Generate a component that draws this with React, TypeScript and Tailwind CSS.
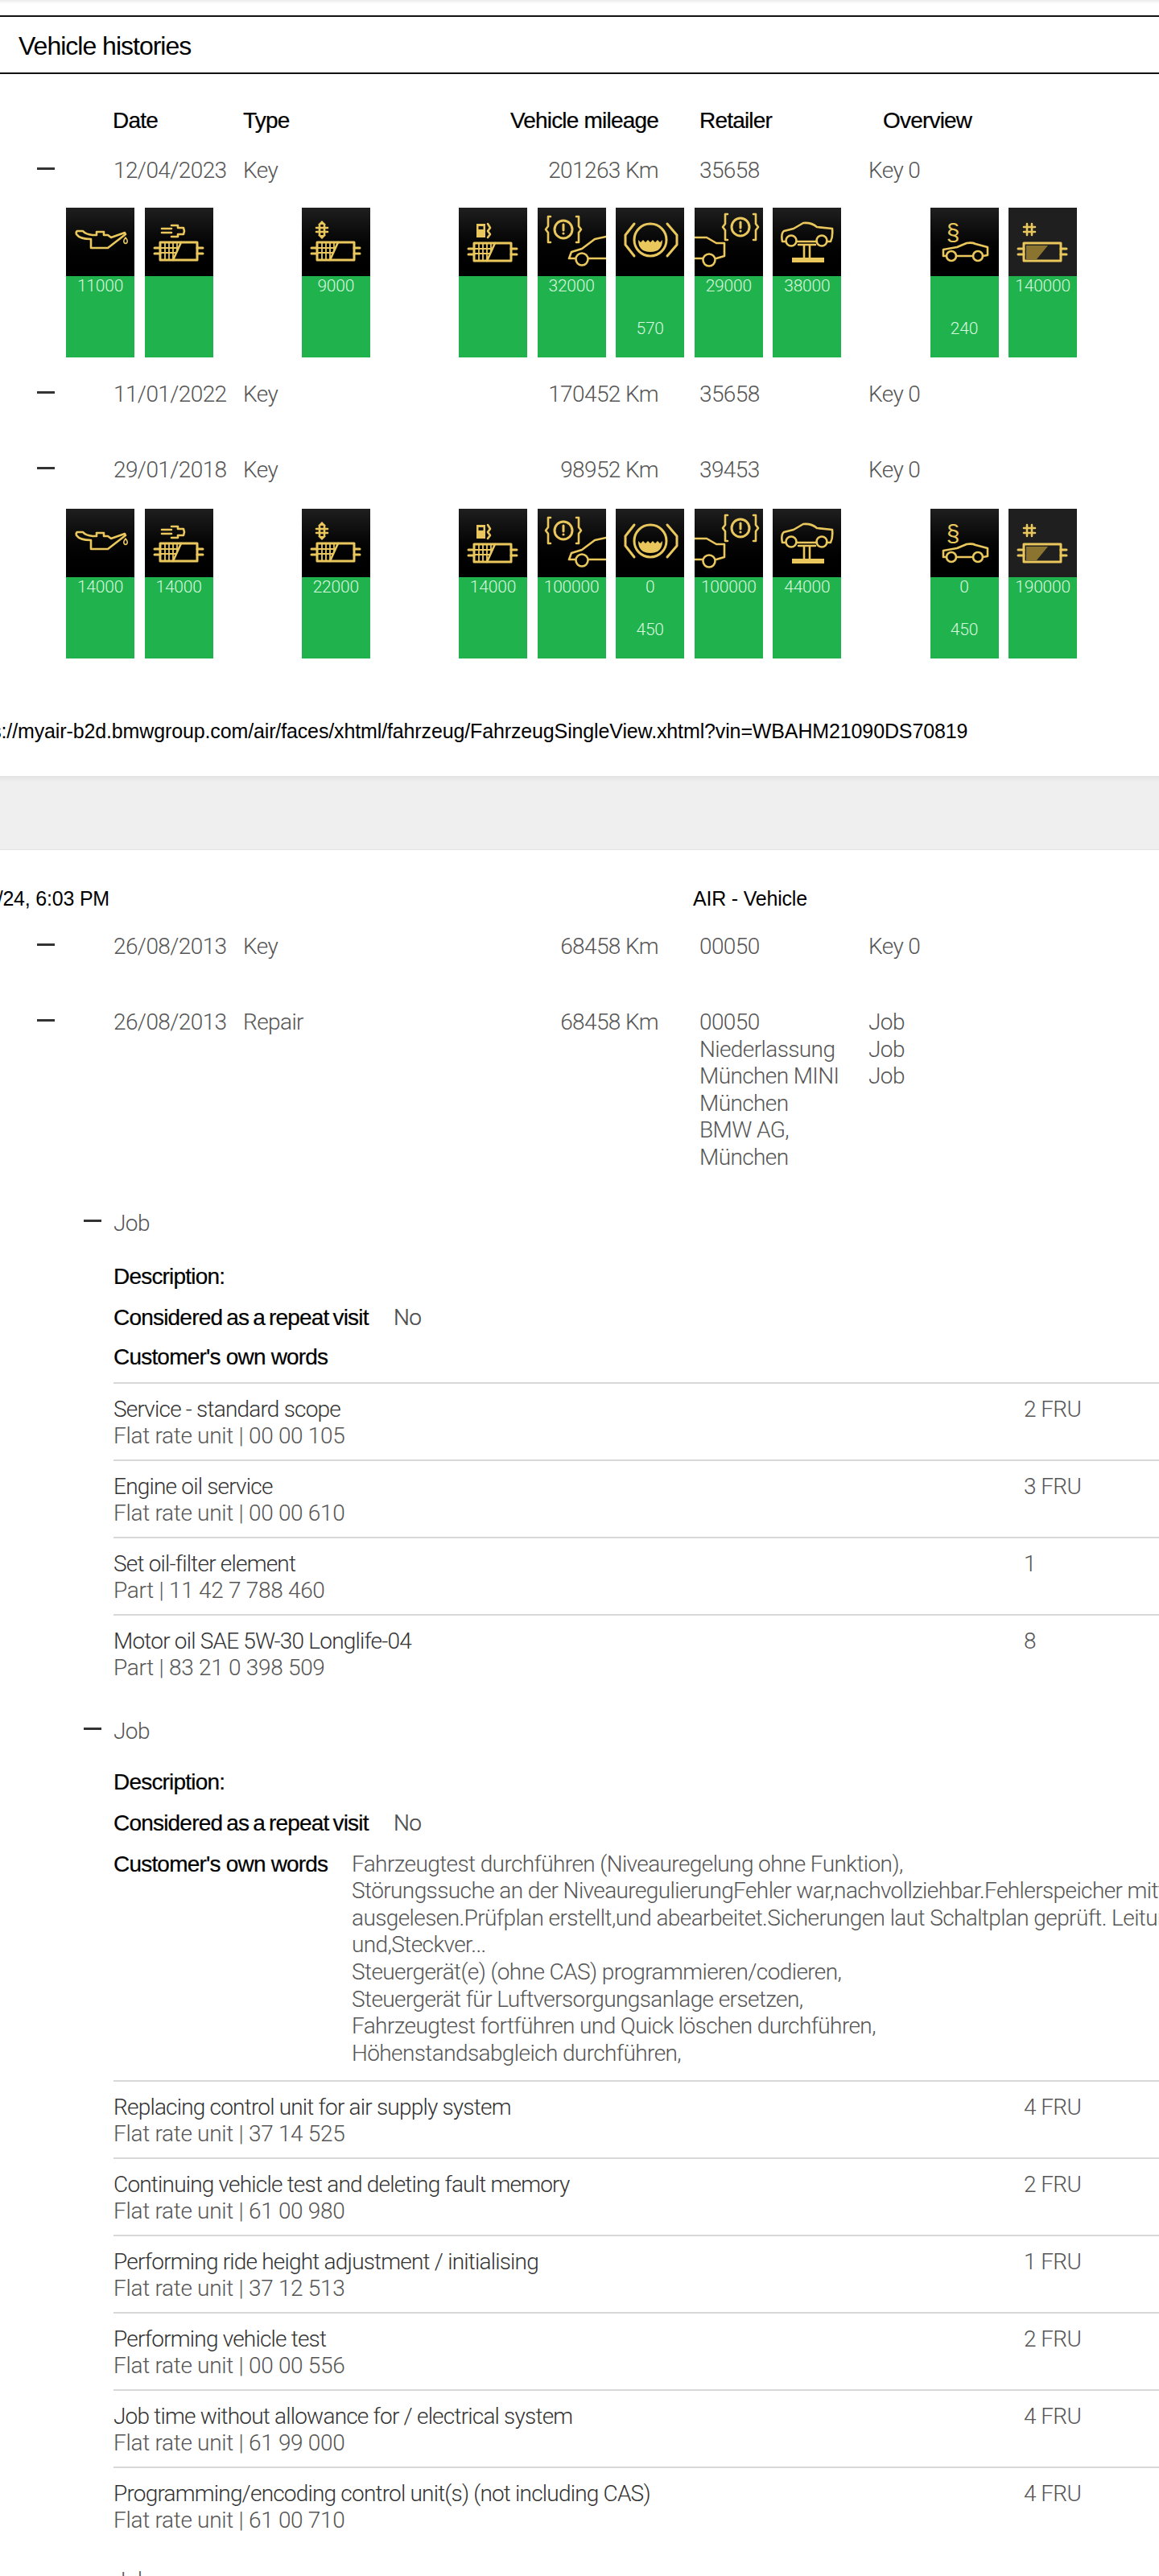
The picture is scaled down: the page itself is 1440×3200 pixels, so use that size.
import React from "react";

const Y = "#e9c75c";
const S = { fill: "none", stroke: Y, strokeWidth: 2.6, strokeLinejoin: "round" as const, strokeLinecap: "round" as const };

function Filter({ y = 0, grid = true, half = false }: { y?: number; grid?: boolean; half?: boolean }) {
  const t = 43 + y;
  return (
    <g>
      {half ? <path d={`M22 ${t + 3}H49L35 ${t + 20}H22Z`} fill="#8a7430" /> : null}
      <path d={`M19 ${t}H65V${t + 22}H19Z`} {...S} strokeWidth={3} />
      <path d={`M12 ${t + 7}H19M12 ${t + 14}H19M65 ${t + 7}H72M65 ${t + 14}H72`} {...S} strokeWidth={3} />
      {grid ? (
        <g>
          <path d={`M45 ${t}L35 ${t + 22}`} {...S} />
          <path d={`M25 ${t + 1}V${t + 21}M30 ${t + 1}V${t + 21}M35 ${t + 1}V${t + 20}M40 ${t + 1}V${t + 10}M20 ${t + 7}H42M20 ${t + 13}H38`} {...S} strokeWidth={1.8} />
        </g>
      ) : null}
    </g>
  );
}

function Brake({ cx, cy, r = 11, bx = 20 }: { cx: number; cy: number; r?: number; bx?: number }) {
  return (
    <g>
      <circle cx={cx} cy={cy} r={r} {...S} strokeWidth={3} />
      <path d={`M${cx} ${cy - 6}V${cy + 1}`} stroke={Y} strokeWidth={3} strokeLinecap="round" />
      <circle cx={cx} cy={cy + 5} r={1.6} fill={Y} />
      <path d={`M${cx - bx + 4} ${cy - 16}H${cx - bx + 1}V${cy - 4}L${cx - bx - 2} ${cy}L${cx - bx + 1} ${cy + 4}V${cy + 16}H${cx - bx + 4}`} {...S} />
      <path d={`M${cx + bx - 4} ${cy - 16}H${cx + bx - 1}V${cy - 4}L${cx + bx + 2} ${cy}L${cx + bx - 1} ${cy + 4}V${cy + 16}H${cx + bx - 4}`} {...S} />
    </g>
  );
}

const icons: Record<string, React.ReactNode> = {
  oil: (
    <g>
      <path d="M14 29H21Q24 33 33 34H38V30H47V34H52L56 37L73 31L74 33L52 50H31V39Q17 39 13 33Q12 30 14 29Z" {...S} />
      <path d="M74 37Q71 41 72 43Q74 46 76 43Q77 41 74 37Z" {...S} strokeWidth={1.6} />
    </g>
  ),
  injector: (
    <g>
      <path d="M21 26H33M21 31H33M33 22H41V25H48L49 29L48 33H41V36H33" {...S} />
      <Filter />
    </g>
  ),
  hash: (
    <g>
      <path d="M22 21V34M28 21V34M18 25H32M18 30H32" {...S} />
      <path d="M25 16L20 21H30ZM25 39L20 34H30Z" fill={Y} />
      <Filter />
    </g>
  ),
  fuel: (
    <g>
      <path d="M22 20H33V37H22Z" fill={Y} />
      <path d="M24.5 23H30.5V27H24.5Z" fill="#141414" />
      <path d="M36 20L39 25L36 29L39 33L36 37" {...S} />
      <Filter y={1} />
    </g>
  ),
  brakeFront: (
    <g>
      <Brake cx={32} cy={27} />
      <path d="M85 36L71 39L55 51L42 55L39 63H47M63 63H85" {...S} />
      <circle cx={55} cy={64} r={7.5} {...S} />
    </g>
  ),
  pad: (
    <g>
      <circle cx={43} cy={40} r={20} {...S} strokeWidth={3} />
      <path d="M28 40L31 43L34 40L37 43L40 40L43 43L46 40L49 43L52 40L55 43L58 40Q58 55 43 55Q28 55 28 40Z" fill={Y} />
      <path d="M23 20L12 34V46L23 60M64 20L76 34V46L64 60" {...S} strokeWidth={3} />
    </g>
  ),
  brakeRear: (
    <g>
      <Brake cx={57} cy={24} />
      <path d="M0 37H15L27 44H37V60L27 63M10 63H0" {...S} />
      <circle cx={18} cy={65} r={7.5} {...S} />
    </g>
  ),
  lift: (
    <g>
      <path d="M16 42H12Q10 32 14 29L26 26L38 19Q48 18 55 24L74 26Q75 36 72 42H67M55 42H30" {...S} />
      <circle cx={23} cy={41} r={6.5} {...S} />
      <circle cx={61} cy={41} r={6.5} {...S} />
      <path d="M32 46H53M39 47V62M46 47V62" {...S} />
      <path d="M24 62H64V68H24Z" fill={Y} />
    </g>
  ),
  para: (
    <g>
      <text x={28} y={41} textAnchor="middle" fontSize={30} fill={Y} fontFamily="'Liberation Sans',sans-serif">§</text>
      <path d="M20 60H16V52L33 49L45 44Q52 43 56 45L71 49V59L65 60M53 60H32" {...S} />
      <circle cx={26} cy={60} r={6} {...S} />
      <circle cx={59} cy={60} r={6} {...S} />
    </g>
  ),
  tank: (
    <g>
      <path d="M23 20V34M29 20V34M19 24H33M19 30H33" {...S} />
      <Filter y={1} grid={false} half />
    </g>
  ),
};

function Tile({ icon, top, bottom, flat }: { icon: string; top?: string; bottom?: string; flat?: boolean }) {
  return (
    <div className="flex w-[85px] flex-col">
      <div className={flat ? "h-[85px] bg-[#1f1f1f]" : "h-[85px] bg-gradient-to-b from-[#1f1f1f] to-[#000000]"}>
        <svg viewBox="0 0 85 85" width="85" height="85">{icons[icon]}</svg>
      </div>
      <div className="flex h-[101px] flex-col items-center bg-[#20b24d] font-['Roboto',sans-serif] text-[21px] font-light leading-[24px] tracking-[-0.2px] text-[#d8f7df]">
        <div className="h-[24px]">{top}</div>
        <div className="mt-[29px] h-[24px]">{bottom}</div>
      </div>
    </div>
  );
}

type T = { icon: string; top?: string; bottom?: string; flat?: boolean } | null;

function Tiles({ items, className }: { items: T[]; className: string }) {
  return (
    <div className={`ml-[82px] grid grid-cols-[repeat(13,85px)] gap-x-[12.6px] ${className}`}>
      {items.map((t, i) => (t ? <Tile key={i} {...t} /> : <div key={i} />))}
    </div>
  );
}

const body = "font-['Roboto','Liberation_Sans',sans-serif] font-light text-[28px] leading-[34px] tracking-[-0.6px] text-[#555555]";
const head = "font-['Liberation_Sans',sans-serif] text-[28px] leading-[34px] tracking-[-0.8px] text-black [-webkit-text-stroke:0.2px_black]";

function Minus({ className = "" }: { className?: string }) {
  return <div className={`h-[3px] w-[22px] bg-[#333333] ${className}`} />;
}

function HRow({ date, type, km, ret, over, className }: { date: string; type: string; km: string; ret: React.ReactNode; over: React.ReactNode; className: string }) {
  return (
    <div className={`grid grid-cols-[46px_95px_161px_200px_316px_51px_210px_1fr] ${body} ${className}`}>
      <div />
      <div><Minus className="mt-[13px]" /></div>
      <div>{date}</div>
      <div>{type}</div>
      <div className="text-right">{km}</div>
      <div />
      <div className="leading-[33.6px]">{ret}</div>
      <div className="leading-[33.6px]">{over}</div>
    </div>
  );
}

function JobHead({ className }: { className: string }) {
  return (
    <div className={`flex ${body} ${className}`}>
      <Minus className="ml-[104px] mt-[12px] mr-[15px]" />
      <div>Job</div>
    </div>
  );
}

function WorkRow({ title, sub, qty }: { title: string; sub: string; qty: string }) {
  return (
    <div className={`ml-[141px] flex h-[96px] border-t-2 border-[#d8d8d8] pt-[15px] ${body}`}>
      <div className="w-[1131px] leading-[33px]">
        <div className="tracking-[-0.8px] text-[#333333]">{title}</div>
        <div className="tracking-[-0.3px]">{sub}</div>
      </div>
      <div className="leading-[33px]">{qty}</div>
    </div>
  );
}

const rows1 = [
  ["Service - standard scope", "Flat rate unit | 00 00 105", "2 FRU"],
  ["Engine oil service", "Flat rate unit | 00 00 610", "3 FRU"],
  ["Set oil-filter element", "Part | 11 42 7 788 460", "1"],
  ["Motor oil SAE 5W-30 Longlife-04", "Part | 83 21 0 398 509", "8"],
];
const rows2 = [
  ["Replacing control unit for air supply system", "Flat rate unit | 37 14 525", "4 FRU"],
  ["Continuing vehicle test and deleting fault memory", "Flat rate unit | 61 00 980", "2 FRU"],
  ["Performing ride height adjustment / initialising", "Flat rate unit | 37 12 513", "1 FRU"],
  ["Performing vehicle test", "Flat rate unit | 00 00 556", "2 FRU"],
  ["Job time without allowance for / electrical system", "Flat rate unit | 61 99 000", "4 FRU"],
  ["Programming/encoding control unit(s) (not including CAS)", "Flat rate unit | 61 00 710", "4 FRU"],
];

const tiles1: T[] = [
  { icon: "oil", top: "11000" },
  { icon: "injector" },
  null,
  { icon: "hash", top: "9000" },
  null,
  { icon: "fuel" },
  { icon: "brakeFront", top: "32000" },
  { icon: "pad", bottom: "570" },
  { icon: "brakeRear", top: "29000" },
  { icon: "lift", top: "38000" },
  null,
  { icon: "para", bottom: "240" },
  { icon: "tank", top: "140000", flat: true },
];
const tiles2: T[] = [
  { icon: "oil", top: "14000" },
  { icon: "injector", top: "14000" },
  null,
  { icon: "hash", top: "22000" },
  null,
  { icon: "fuel", top: "14000" },
  { icon: "brakeFront", top: "100000" },
  { icon: "pad", top: "0", bottom: "450" },
  { icon: "brakeRear", top: "100000" },
  { icon: "lift", top: "44000" },
  null,
  { icon: "para", top: "0", bottom: "450" },
  { icon: "tank", top: "190000", flat: true },
];

const words = [
  "Fahrzeugtest durchführen (Niveauregelung ohne Funktion),",
  "Störungssuche an der NiveauregulierungFehler war,nachvollziehbar.Fehlerspeicher mittels",
  "ausgelesen.Prüfplan erstellt,und abearbeitet.Sicherungen laut Schaltplan geprüft. Leitungen",
  "und,Steckver...",
  "Steuergerät(e) (ohne CAS) programmieren/codieren,",
  "Steuergerät für Luftversorgungsanlage ersetzen,",
  "Fahrzeugtest fortführen und Quick löschen durchführen,",
  "Höhenstandsabgleich durchführen,",
];

export default function App() {
  return (
    <div className="h-[3200px] w-[1440px] overflow-hidden bg-white">
      <div className="h-[5px] bg-gradient-to-b from-[#ececec] to-white" />
      <div className="mt-[14px] flex h-[73px] items-center border-y-2 border-[#111111] pl-[23px] pt-[2px] font-['Liberation_Sans',sans-serif] text-[32px] tracking-[-1px] text-black">
        Vehicle histories
      </div>

      <div className={`mt-[41px] grid grid-cols-[140px_162px_200px_316px_51px_228px_1fr] ${head}`}>
        <div />
        <div>Date</div>
        <div>Type</div>
        <div className="text-right">Vehicle mileage</div>
        <div />
        <div>Retailer</div>
        <div>Overview</div>
      </div>

      <HRow className="mt-[28px]" date="12/04/2023" type="Key" km="201263 Km" ret="35658" over="Key 0" />
      <Tiles className="mt-[29px]" items={tiles1} />
      <HRow className="mt-[29px]" date="11/01/2022" type="Key" km="170452 Km" ret="35658" over="Key 0" />
      <HRow className="mt-[60px]" date="29/01/2018" type="Key" km="98952 Km" ret="39453" over="Key 0" />
      <Tiles className="mt-[31px]" items={tiles2} />

      <div className="mt-[75px] ml-[-52px] whitespace-nowrap font-['Liberation_Sans',sans-serif] text-[25px] leading-[30px] tracking-[-0.13px] text-black">
        https://myair-b2d.bmwgroup.com/air/faces/xhtml/fahrzeug/FahrzeugSingleView.xhtml?vin=WBAHM21090DS70819
      </div>

      <div className="mt-[41px] h-[92px] border-b border-[#e4e4e4] bg-gradient-to-b from-[#e2e2e2] via-[#efefef] via-[8%] to-[#efefef]" />

      <div className="mt-[45px] flex font-['Liberation_Sans',sans-serif] text-[25px] leading-[30px] tracking-[-0.2px] text-black">
        <div className="flex w-[136px] shrink-0 justify-end overflow-hidden whitespace-nowrap">
          <span className="shrink-0">/24, 6:03 PM</span>
        </div>
        <div className="ml-[725px]">AIR - Vehicle</div>
      </div>

      <HRow className="mt-[28px]" date="26/08/2013" type="Key" km="68458 Km" ret="00050" over="Key 0" />
      <HRow
        className="mt-[60px]"
        date="26/08/2013"
        type="Repair"
        km="68458 Km"
        ret={
          <>
            <div>00050</div>
            <div>Niederlassung</div>
            <div>München MINI</div>
            <div>München</div>
            <div>BMW AG,</div>
            <div>München</div>
          </>
        }
        over={
          <>
            <div>Job</div>
            <div>Job</div>
            <div>Job</div>
          </>
        }
      />

      <JobHead className="mt-[48px]" />
      <div className={`ml-[141px] mt-[32px] ${head}`}>Description:</div>
      <div className={`ml-[141px] mt-[17px] flex ${head}`}>
        <div className="w-[348px] [word-spacing:-2px]">Considered as a repeat visit</div>
        <div className={body}>No</div>
      </div>
      <div className={`ml-[141px] mt-[15px] ${head}`}>Customer's own words</div>
      <div className="mt-[14px]">
        {rows1.map((r) => (
          <WorkRow key={r[0]} title={r[0]} sub={r[1]} qty={r[2]} />
        ))}
      </div>

      <JobHead className="mt-[33px]" />
      <div className={`ml-[141px] mt-[29px] ${head}`}>Description:</div>
      <div className={`ml-[141px] mt-[17px] flex ${head}`}>
        <div className="w-[348px] [word-spacing:-2px]">Considered as a repeat visit</div>
        <div className={body}>No</div>
      </div>
      <div className="ml-[141px] mt-[17px] flex">
        <div className={`w-[296px] shrink-0 ${head}`}>Customer's own words</div>
        <div className={`whitespace-nowrap ${body}`}>
          {words.map((w) => (
            <div key={w} className="leading-[33.6px]">{w}</div>
          ))}
        </div>
      </div>
      <div className="mt-[17px]">
        {rows2.map((r) => (
          <WorkRow key={r[0]} title={r[0]} sub={r[1]} qty={r[2]} />
        ))}
      </div>
      <JobHead className="mt-[29px]" />
    </div>
  );
}
